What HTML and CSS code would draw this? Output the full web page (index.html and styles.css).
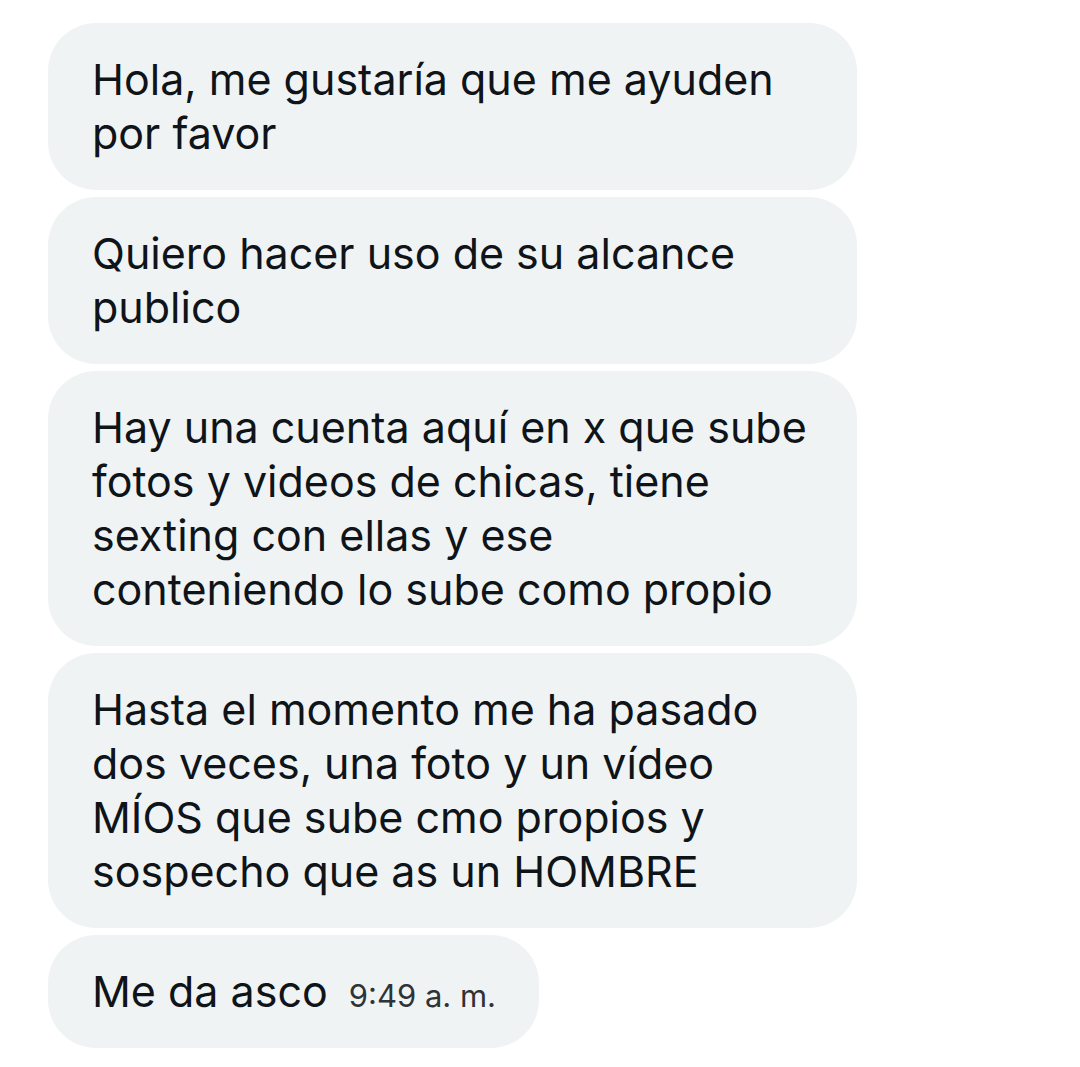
FILE: index.html
```html
<!DOCTYPE html>
<html lang="es">
<head>
<meta charset="utf-8">
<link rel="stylesheet" href="styles.css">
</head>
<body>
<div class="thread">
  <div class="bubble">Hola, me gustaría que me ayuden<br>por favor</div>
  <div class="bubble">Quiero hacer uso de su alcance<br>publico</div>
  <div class="bubble">Hay una cuenta aquí en x que sube<br>fotos y videos de chicas, tiene<br>sexting con ellas y ese<br>conteniendo lo sube como propio</div>
  <div class="bubble">Hasta el momento me ha pasado<br>dos veces, una foto y un vídeo<br>MÍOS que sube cmo propios y<br>sospecho que as un HOMBRE</div>
  <div class="bubble last"><span>Me da asco</span><span class="time">9:49 a. m.</span></div>
</div>
</body>
</html>
```
FILE: styles.css
```css
html, body {
  margin: 0;
  padding: 0;
  background: #ffffff;
}
.thread {
  display: flex;
  flex-direction: column;
  align-items: flex-start;
  gap: 7px;
  padding: 23px 0 0 48px;
}
.bubble {
  box-sizing: border-box;
  width: 809px;
  background: #eff3f4;
  color: #0f1419;
  border-radius: 48px;
  padding: 29px 44px 30px 44px;
  font-family: Inter, Roboto, "Liberation Sans", sans-serif;
  font-size: 43px;
  line-height: 54px;
}
.last {
  width: auto;
  display: flex;
  align-items: baseline;
  gap: 21px;
  padding-right: 43px;
}
.time {
  font-size: 31px;
  line-height: 30px;
  color: #2f3336;
}
```
